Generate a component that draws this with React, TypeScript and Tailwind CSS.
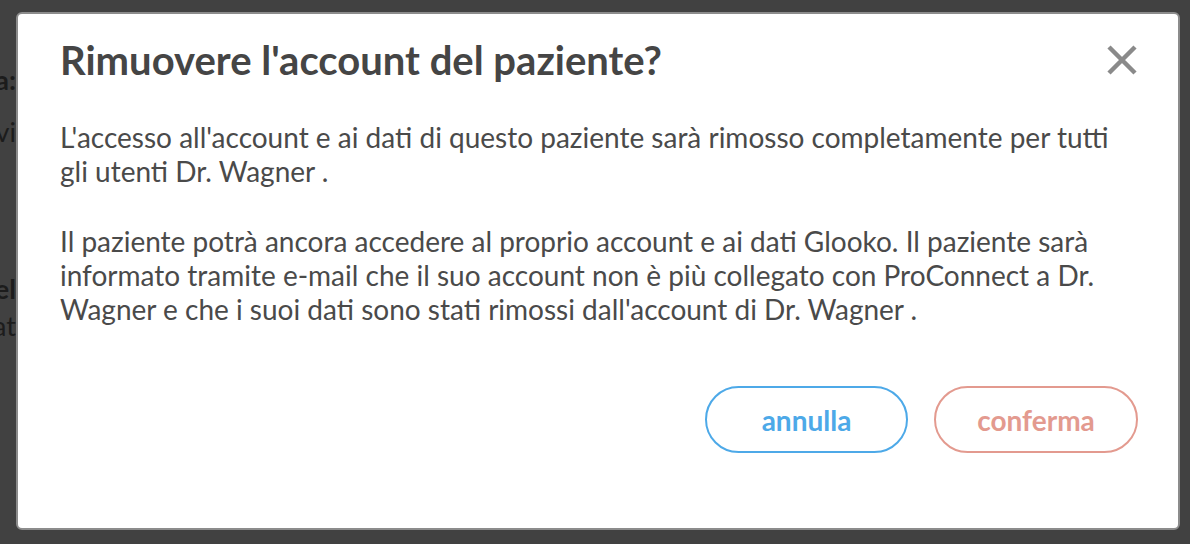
export default function App() {
  const behind = [
    { top: 64, text: "Dati paziente a:", bold: true },
    { top: 116, text: "Dispositivi", bold: false },
    { top: 273, text: "Modello del", bold: true },
    { top: 310, text: "ultimo aggiornamento dat", bold: false },
  ];

  return (
    <div className="relative h-[544px] w-full overflow-hidden bg-[#414141] font-['Lato','Liberation_Sans',sans-serif]">
      {/* page behind the overlay */}
      <div className="absolute left-0 top-0 h-full w-[16px] overflow-hidden">
        {behind.map((b) => (
          <div
            key={b.top}
            className={`absolute right-0 whitespace-nowrap text-[27px] leading-[32px] text-[#1c1c1c] ${b.bold ? "font-bold" : ""}`}
            style={{ top: b.top }}
          >
            {b.text}
          </div>
        ))}
      </div>

      <div className="ml-[16px] mt-[12px] flex h-[518px] w-[1164px] flex-col rounded-[6px] border-2 border-[#8c8c8c] bg-white pl-[42px] pr-[40px]">
        <div className="mt-[23px] flex items-center justify-between">
          <h2 className="text-[40px] font-bold leading-[46px] text-[#454545]">Rimuovere l'account del paziente?</h2>
          <button className="mr-[1px] flex h-[30px] w-[30px] items-center justify-center">
            <svg width="30" height="30" viewBox="0 0 30 30">
              <path d="M2 2 L28 28 M28 2 L2 28" stroke="#8a8a8a" strokeWidth="4.5" />
            </svg>
          </button>
        </div>

        <div className="mt-[37px] text-[28px] leading-[34px] text-[#4a4a4a]">
          <p>
            L'accesso all'account e ai dati di questo paziente sarà rimosso completamente per tutti gli utenti Dr. Wagner .
          </p>
          <p className="mt-[36px]">
            Il paziente potrà ancora accedere al proprio account e ai dati Glooko. Il paziente sarà informato tramite
            e-mail che il suo account non è più collegato con ProConnect a Dr. Wagner e che i suoi dati sono stati
            rimossi dall'account di Dr. Wagner .
          </p>
        </div>

        <div className="mt-[60px] flex justify-end gap-[26px]">
          <button className="h-[67px] w-[203px] rounded-full border-2 border-[#4da9e8] text-[28px] font-bold text-[#4da9e8]">
            annulla
          </button>
          <button className="h-[67px] w-[204px] rounded-full border-2 border-[#e39a8f] text-[28px] font-bold text-[#e39a8f]">
            conferma
          </button>
        </div>
      </div>
    </div>
  );
}
